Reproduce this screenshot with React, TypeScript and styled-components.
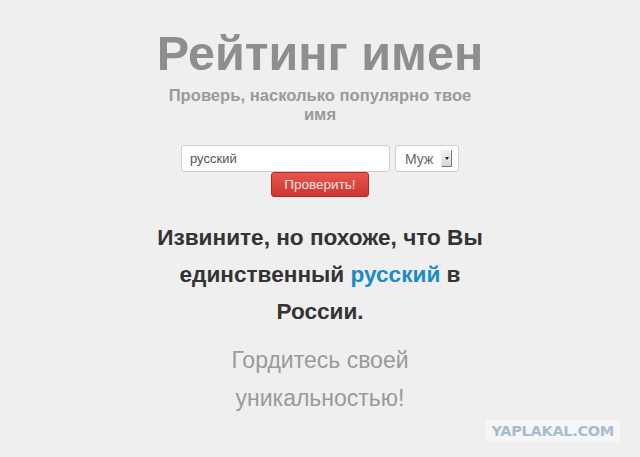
import React from "react";
import styled, { createGlobalStyle } from "styled-components";

const Global = createGlobalStyle`
  html, body { margin: 0; padding: 0; }
  body {
    background: #efefef;
    font-family: "Liberation Sans", Arial, sans-serif;
    width: 640px;
    height: 457px;
    overflow: hidden;
  }
`;

const Page = styled.div`
  position: relative;
  width: 640px;
  height: 457px;
  display: flex;
  flex-direction: column;
  align-items: center;
  padding-top: 25px;
  box-sizing: border-box;
`;

const Title = styled.h1`
  margin: 0;
  font-size: 48.5px;
  line-height: 56px;
  font-weight: bold;
  color: #8e8e8e;
`;

const Subtitle = styled.h2`
  margin: 5px 0 0;
  width: 330px;
  text-align: center;
  font-size: 16.6px;
  line-height: 19px;
  font-weight: bold;
  color: #9a9a9a;
`;

const Form = styled.form`
  margin-top: 21px;
  display: flex;
  flex-direction: column;
  align-items: center;
`;

const Row = styled.div`
  display: flex;
  gap: 5px;
`;

const Input = styled.div`
  width: 207px;
  height: 25px;
  background: #fff;
  border: 1px solid #cfcfcf;
  border-radius: 3px;
  display: flex;
  align-items: center;
  font-size: 13px;
  color: #555;
  span { margin-left: 8px; }
`;

const Select = styled.div`
  width: 64px;
  height: 27px;
  background: #fff;
  border: 1px solid #cfcfcf;
  border-radius: 3px;
  display: flex;
  align-items: center;
  justify-content: space-between;
  padding: 0 6px 0 9px;
  box-sizing: border-box;
  font-size: 14px;
  color: #666;
`;

const Arrow = styled.div`
  width: 9px;
  height: 15px;
  background: linear-gradient(#f2f2f2, #d8d8d8);
  border-right: 1px solid #777;
  border-bottom: 1px solid #777;
  border-top: 1px solid #eee;
  border-left: 1px solid #eee;
  display: flex;
  align-items: center;
  justify-content: center;
  &::after {
    content: "";
    border-left: 2px solid transparent;
    border-right: 2px solid transparent;
    border-top: 3px solid #222;
  }
`;

const Button = styled.button`
  width: 98px;
  height: 25px;
  border: 1px solid #b82a26;
  border-radius: 3px;
  background: linear-gradient(#e8564f, #cc3530);
  color: #fbe3e2;
  font-family: "Liberation Sans", Arial, sans-serif;
  font-size: 13.5px;
  padding: 0;
  cursor: pointer;
`;

const Message = styled.p`
  margin: 22px 0 0;
  width: 350px;
  text-align: center;
  font-size: 22.6px;
  line-height: 37px;
  font-weight: bold;
  color: #333;
`;

const Accent = styled.span`
  color: #1a8bc7;
`;

const Proud = styled.p`
  margin: 11px 0 0;
  width: 240px;
  text-align: center;
  font-size: 23px;
  line-height: 38px;
  font-weight: normal;
  color: #9a9a9a;
`;

const Watermark = styled.div`
  position: absolute;
  right: 20px;
  bottom: 15px;
  padding: 2px 6px;
  background: #f6f6f6;
  color: #a9bccb;
  font-family: "DejaVu Sans", sans-serif;
  font-weight: bold;
  font-size: 14.5px;
  line-height: 18px;
  letter-spacing: -0.3px;
`;

export default function App() {
  return (
    <>
      <Global />
      <Page>
        <Title>Рейтинг имен</Title>
        <Subtitle>Проверь, насколько популярно твое имя</Subtitle>
        <Form onSubmit={(e) => e.preventDefault()}>
          <Row>
            <Input><span>русский</span></Input>
            <Select>
              Муж
              <Arrow />
            </Select>
          </Row>
          <Button type="submit">Проверить!</Button>
        </Form>
        <Message>
          Извините, но похоже, что Вы единственный <Accent>русский</Accent> в России.
        </Message>
        <Proud>Гордитесь своей уникальностью!</Proud>
        <Watermark>YAPLAKAL.COM</Watermark>
      </Page>
    </>
  );
}
